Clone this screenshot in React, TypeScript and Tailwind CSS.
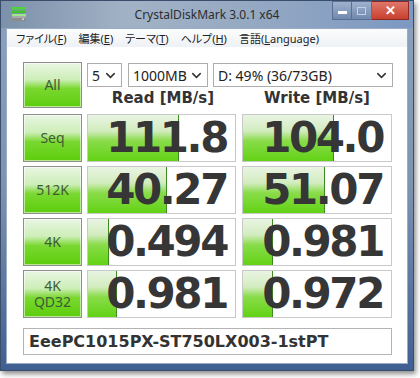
import { ChevronDown } from "lucide-react";

type ResultRow = {
  label: string;
  read: string;
  write: string;
  readFill: number;
  writeFill: number;
};

const rows: ResultRow[] = [
  { label: "Seq", read: "111.8", write: "104.0", readFill: 91, writeFill: 91 },
  { label: "512K", read: "40.27", write: "51.07", readFill: 79, writeFill: 82 },
  { label: "4K", read: "0.494", write: "0.981", readFill: 21, writeFill: 30 },
  { label: "4K\nQD32", read: "0.981", write: "0.972", readFill: 29, writeFill: 30 },
];

const menu: [string, string, string][] = [
  ["ファイル(", "F", ")"],
  ["編集(", "E", ")"],
  ["テーマ(", "T", ")"],
  ["ヘルプ(", "H", ")"],
  ["言語(", "L", "anguage)"],
];

const uiFont = "font-['Noto_Sans','Noto_Sans_CJK_JP',sans-serif]";

function GreenButton({ label }: { label: string }) {
  return (
    <div className="flex h-full w-[59px] shrink-0 items-center justify-center whitespace-pre-line border border-[#8e8e8e] bg-[linear-gradient(to_bottom,#e9f6e3_0%,#cdeeb8_38%,#7ad830_58%,#5ccd0c_100%)] text-center text-[14px] leading-[16px] text-[#3f5a36] shadow-[inset_0_0_0_1px_rgba(255,255,255,0.55)]">
      {label}
    </div>
  );
}

function ValueCell({ value, fill, wide }: { value: string; fill: number; wide?: boolean }) {
  return (
    <div
      className={`relative flex h-full items-center justify-end border border-[#c9c9c9] bg-white pr-[8px] ${
        wide ? "w-[150px]" : "w-[149px]"
      }`}
    >
      <div
        className="absolute inset-y-0 left-0 border-r border-[#3d8a22] bg-[linear-gradient(to_bottom,#e9f4e3_0%,#d2ecbf_35%,#8adc4a_56%,#62d214_100%)]"
        style={{ width: fill }}
      />
      <span className="relative font-['DejaVu_Sans',sans-serif] text-[42px] font-bold leading-none tracking-[-2.4px] text-[#363636]">
        {value}
      </span>
    </div>
  );
}

function Select({ text, width }: { text: string; width: string }) {
  return (
    <div
      className={`flex h-[24px] items-center justify-between border border-[#adadad] bg-white pl-[4px] pr-[3px] text-[14px] text-[#222] ${width}`}
    >
      <span>{text}</span>
      <ChevronDown size={15} strokeWidth={2.4} className="text-[#333]" />
    </div>
  );
}

function AppIcon() {
  return (
    <svg width="16" height="16" viewBox="0 0 16 16">
      <rect x="1" y="1" width="14" height="2.5" fill="#4fd43a" />
      <rect x="1" y="4.5" width="14" height="2.5" fill="#3fc42c" />
      <rect x="1" y="8" width="14" height="2" fill="#9fe88a" />
      <rect x="1" y="10.5" width="14" height="4.5" fill="#8c8c8c" />
      <rect x="1" y="10.5" width="14" height="1" fill="#c8c8c8" />
      <rect x="11" y="12.5" width="2" height="1.2" fill="#e8e8e8" />
    </svg>
  );
}

export default function App() {
  return (
    <div className={`h-[378px] w-[420px] overflow-hidden bg-white ${uiFont}`}>
      <div className="flex h-[371px] w-[414px] flex-col border border-[#3a4e6c] bg-[linear-gradient(to_bottom,#8da2bd_0%,#7d93b2_50%,#3f5f92_100%)] shadow-[2px_3px_5px_rgba(0,0,0,0.45)]">
        {/* title bar */}
        <div className="grid h-[27px] shrink-0 grid-cols-[1fr_auto_1fr] bg-[linear-gradient(to_right,#7b90aa_0%,#a2b2c6_30%,#95a9c2_60%,#7c98c2_100%)]">
          <div className="pl-[10px] pt-[5px]">
            <AppIcon />
          </div>
          <div className="pt-[5px] text-[12px] text-[#2c2c2c]">CrystalDiskMark 3.0.1 x64</div>
          <div className="flex justify-end pr-[4px]">
            <div className="flex h-[19px] w-[20px] items-end justify-center border border-[#5c6f90] bg-[linear-gradient(to_bottom,#9fb3cf,#7088ae)] pb-[5px]">
              <div className="h-[3px] w-[9px] bg-white" />
            </div>
            <div className="flex h-[19px] w-[20px] items-center justify-center border border-l-0 border-[#5c6f90] bg-[linear-gradient(to_bottom,#9fb3cf,#7088ae)]">
              <div className="h-[8px] w-[9px] border border-[#c6d2e4]" />
            </div>
            <div className="flex h-[19px] w-[37px] items-center justify-center border border-l-0 border-[#8a2a22] bg-[linear-gradient(to_bottom,#e0786a,#c8402e)] text-[13px] font-bold leading-none text-white">
              ✕
            </div>
          </div>
        </div>

        {/* client */}
        <div className="mx-[5px] mb-[6px] flex flex-1 flex-col border border-[#9aabc2] bg-white">
          <div className="flex h-[18px] shrink-0 items-center gap-[12px] bg-[linear-gradient(to_bottom,#fbfcfd,#eef1f5)] pl-[9px] text-[11px] leading-none text-[#222] [font-feature-settings:'palt']">
            {menu.map(([a, k, b]) => (
              <span key={a}>
                {a}
                <span className="underline">{k}</span>
                {b}
              </span>
            ))}
          </div>

          <div className="flex flex-col pl-[16px] pt-[15px]">
            <div className="flex h-[46px]">
              <GreenButton label="All" />
              <div className="ml-[5px] flex flex-col">
                <div className="mt-[1px] flex">
                  <Select text="5" width="w-[35px]" />
                  <Select text="1000MB" width="ml-[6px] w-[80px]" />
                  <Select text="D: 49% (36/73GB)" width="ml-[5px] w-[180px]" />
                </div>
                <div className="flex pt-[2px] font-['DejaVu_Sans',sans-serif] text-[15px] font-bold leading-[18px] text-[#333]">
                  <div className="w-[149px] pl-[3px] text-center">Read [MB/s]</div>
                  <div className="ml-[6px] w-[150px] text-center">Write [MB/s]</div>
                </div>
              </div>
            </div>

            <div className="mt-[6px] flex flex-col gap-[4px]">
              {rows.map((r) => (
                <div key={r.label} className="flex h-[48px]">
                  <GreenButton label={r.label} />
                  <div className="ml-[5px] h-full">
                    <ValueCell value={r.read} fill={r.readFill} />
                  </div>
                  <div className="ml-[6px] h-full">
                    <ValueCell value={r.write} fill={r.writeFill} wide />
                  </div>
                </div>
              ))}
            </div>

            <div className="mt-[10px] flex h-[27px] w-[369px] items-center border border-[#b4b4b4] bg-white pl-[5px] font-['DejaVu_Sans',sans-serif] text-[16px] font-bold text-[#333]">
              EeePC1015PX-ST750LX003-1stPT
            </div>
          </div>
        </div>
      </div>
    </div>
  );
}
